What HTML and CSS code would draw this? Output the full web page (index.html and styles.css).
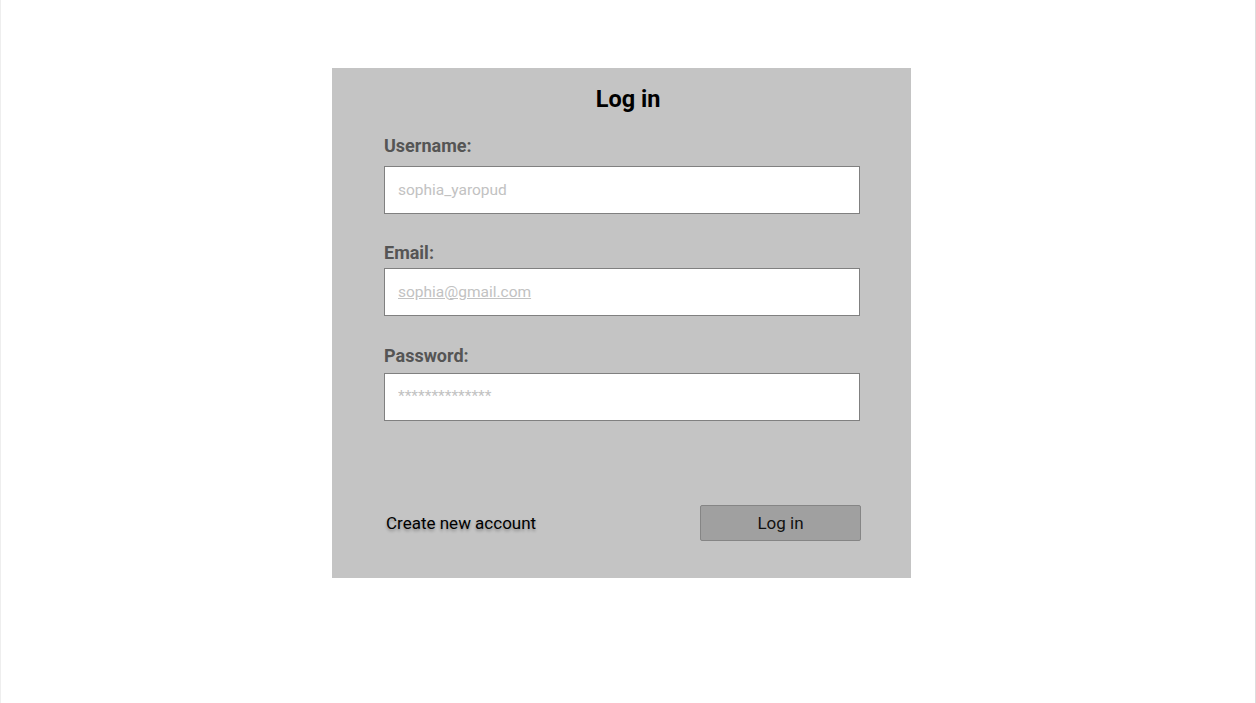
FILE: index.html
```html
<!DOCTYPE html>
<html lang="en">
<head>
<meta charset="utf-8">
<title>Log in</title>
<link rel="stylesheet" href="styles.css">
</head>
<body>
<div class="frame">
  <form class="panel" onsubmit="return false">
    <h1 class="title">Log in</h1>
    <div class="field field--first">
      <label class="label" for="u">Username:</label>
      <input class="input" id="u" type="text" value="sophia_yaropud">
    </div>
    <div class="field field--second">
      <label class="label" for="e">Email:</label>
      <input class="input input--link" id="e" type="text" value="sophia@gmail.com">
    </div>
    <div class="field field--last">
      <label class="label" for="p">Password:</label>
      <input class="input input--stars" id="p" type="text" value="**************">
    </div>
    <div class="actions">
      <a class="create" href="#">Create new account</a>
      <button class="btn" type="button">Log in</button>
    </div>
  </form>
</div>
</body>
</html>
```
FILE: styles.css
```css
html, body {
  margin: 0;
  padding: 0;
  background: #fff;
}
body {
  font-family: Roboto, "Liberation Sans", Arial, sans-serif;
}
.frame {
  box-sizing: border-box;
  width: 1256px;
  height: 703px;
  border-left: 1px solid #eeeeee;
  border-right: 1px solid #dddddd;
  padding: 68px 0 0 331px;
}
.panel {
  box-sizing: border-box;
  width: 579px;
  height: 510px;
  background: #c4c4c4;
  padding: 17px 0 0 52px;
  display: flex;
  flex-direction: column;
}
.title {
  margin: 0;
  font-size: 23.5px;
  line-height: 28px;
  font-weight: 700;
  color: #000;
  text-align: center;
  padding-left: 6px;
  width: 476px;
}
.field {
  display: flex;
  flex-direction: column;
  width: 476px;
}
.field--first {
  margin-top: 23px;
  gap: 10px;
}
.field--second {
  margin-top: 29px;
  gap: 5px;
}
.field--last {
  margin-top: 30px;
  gap: 7px;
}
.label {
  font-size: 18px;
  line-height: 20px;
  font-weight: 700;
  color: #555555;
}
.input {
  box-sizing: border-box;
  width: 476px;
  height: 48px;
  margin: 0;
  border: 1px solid #808080;
  border-radius: 0;
  background: #fff;
  padding: 0 12px 1px 13px;
  font-family: Roboto, "Liberation Sans", Arial, sans-serif;
  font-size: 15.5px;
  color: #c2c2c2;
  outline: none;
}
.input--link {
  text-decoration: underline;
}
.input--stars {
  padding-bottom: 3px;
}
.actions {
  display: flex;
  align-items: center;
  justify-content: space-between;
  width: 477px;
  margin-top: 84px;
}
.create {
  margin-left: 2px;
  font-size: 17px;
  color: #000;
  text-decoration: none;
  text-shadow: 0 2px 3px rgba(0, 0, 0, 0.3);
}
.btn {
  box-sizing: border-box;
  width: 161px;
  height: 36px;
  background: #a0a0a0;
  border: 1px solid #858585;
  border-radius: 2px;
  font-family: Roboto, "Liberation Sans", Arial, sans-serif;
  font-size: 17px;
  color: #111;
  padding: 0;
  cursor: pointer;
}
```
